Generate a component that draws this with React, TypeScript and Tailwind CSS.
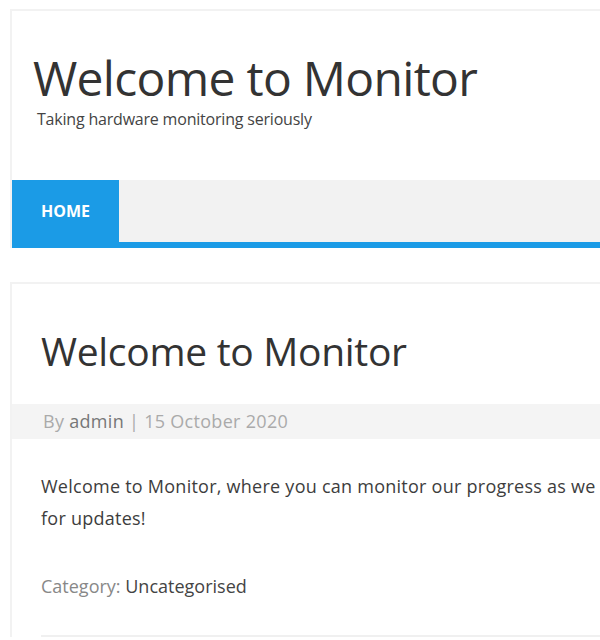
import React from "react";

export default function App() {
  return (
    <div className="min-h-[640px] w-[600px] overflow-hidden bg-white pl-[10px] pt-[9px]" style={{ fontFamily: '"Open Sans", "Noto Sans", sans-serif' }}>
      <div className="w-[620px] border-l-2 border-t-2 border-[#f2f2f2]">
        <div className="h-[169px] pl-[21px] pt-[41px]">
          <h1 className="whitespace-nowrap text-[48px] leading-[52px] tracking-[-0.7px] text-[#333]">Welcome to Monitor</h1>
          <p className="mt-[5px] whitespace-nowrap pl-[4px] text-[16px] leading-[20px] tracking-[-0.2px] text-[#444]">Taking hardware monitoring seriously</p>
        </div>
        <nav className="flex h-[68px] flex-col bg-[#f2f2f2]">
          <div className="flex h-[62px]">
            <div className="flex w-[107px] items-center justify-center bg-[#1b9be6] text-[16px] font-bold text-white">HOME</div>
          </div>
          <div className="h-[6px] bg-[#1b9be6]" />
        </nav>
      </div>

      <div className="mt-[34px] w-[620px] border-l-2 border-t-2 border-[#f2f2f2] pl-[29px] pt-[42px]">
        <h2 className="whitespace-nowrap text-[39px] leading-[50px] tracking-[-0.3px] text-[#333]">Welcome to Monitor</h2>
        <div className="mt-[28px] ml-[-29px] flex h-[35px] items-center bg-[#f4f4f4] pl-[31px] text-[18px] tracking-[0.3px] text-[#aaa]">
          <span>By&nbsp;</span>
          <span className="text-[#777]">admin</span>
          <span>&nbsp;|&nbsp;15 October 2020</span>
        </div>
        <p className="mt-[31px] whitespace-nowrap text-[18px] leading-[32px] tracking-[0.25px] text-[#3d3d3d]">
          Welcome to Monitor, where you can monitor our progress as we go. Check back
          <br />
          for updates!
        </p>
        <div className="mt-[41px] flex whitespace-nowrap text-[18px] leading-[22px]">
          <span className="text-[#888]">Category:&nbsp;</span>
          <span className="text-[#444]">Uncategorised</span>
        </div>
        <div className="mt-[38px] h-[2px] bg-[#f0f0f0]" />
      </div>
    </div>
  );
}
